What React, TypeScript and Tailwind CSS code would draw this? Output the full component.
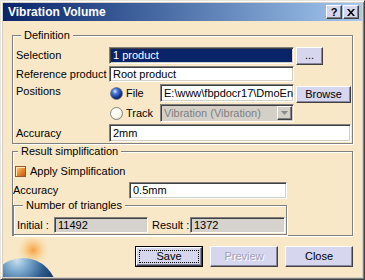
import React from "react";
import clsx from "clsx";

const beige = "bg-[#f8e8c8]";

function Field({ className, children }: { className?: string; children?: React.ReactNode }) {
  return (
    <div
      className={clsx(
        "flex items-center overflow-hidden whitespace-nowrap border border-t-[#808080] border-l-[#808080] border-b-white border-r-white pl-[3px] shadow-[inset_1px_1px_0_#404040,inset_-1px_-1px_0_#d4d0c8]",
        className
      )}
    >
      {children}
    </div>
  );
}

function Btn({ className, children }: { className?: string; children?: React.ReactNode }) {
  return (
    <div
      className={clsx(
        "flex items-center justify-center bg-[#d6d6ee] border border-t-white border-l-white border-b-[#404040] border-r-[#404040] shadow-[inset_-1px_-1px_0_#8888a0]",
        className
      )}
    >
      {children}
    </div>
  );
}

function RadioOn() {
  return (
    <svg width="13" height="13" viewBox="0 0 13 13">
      <defs>
        <radialGradient id="rOn" cx="38%" cy="32%" r="70%">
          <stop offset="0" stopColor="#d8e6ff" />
          <stop offset="0.3" stopColor="#4a7ee0" />
          <stop offset="0.75" stopColor="#16338c" />
          <stop offset="1" stopColor="#0a1a50" />
        </radialGradient>
      </defs>
      <circle cx="6.5" cy="6.5" r="6" fill="url(#rOn)" stroke="#7a7a7a" strokeWidth="0.8" />
    </svg>
  );
}

function RadioOff() {
  return (
    <svg width="13" height="13" viewBox="0 0 13 13">
      <defs>
        <radialGradient id="rOff" cx="40%" cy="35%" r="70%">
          <stop offset="0" stopColor="#ffffff" />
          <stop offset="0.7" stopColor="#fbf7ea" />
          <stop offset="1" stopColor="#d8d4c4" />
        </radialGradient>
      </defs>
      <circle cx="6.5" cy="6.5" r="6" fill="url(#rOff)" stroke="#6a6a6a" strokeWidth="0.8" />
    </svg>
  );
}

function Globe() {
  return (
    <svg width="60" height="39" viewBox="0 0 60 39" className="self-end">
      <defs>
        <radialGradient id="glow" cx="30" cy="12" r="18" gradientUnits="userSpaceOnUse">
          <stop offset="0" stopColor="#f6a040" />
          <stop offset="0.45" stopColor="#f8c880" stopOpacity="0.7" />
          <stop offset="1" stopColor="#f8e8c8" stopOpacity="0" />
        </radialGradient>
        <radialGradient id="earth" cx="14" cy="22" r="40" gradientUnits="userSpaceOnUse">
          <stop offset="0" stopColor="#c8e0f0" />
          <stop offset="0.3" stopColor="#7aa8cc" />
          <stop offset="0.7" stopColor="#2c5a8c" />
          <stop offset="1" stopColor="#183a64" />
        </radialGradient>
      </defs>
      <circle cx="30" cy="12" r="18" fill="url(#glow)" />
      <circle cx="20" cy="54" r="34" fill="url(#earth)" />
    </svg>
  );
}

export default function App() {
  return (
    <div className="w-[365px] h-[280px] flex flex-col bg-[#d4d0c8] p-[2px] border border-t-[#e8e4dc] border-l-[#e8e4dc] border-b-[#404040] border-r-[#404040] shadow-[inset_1px_1px_0_#fff,inset_-1px_-1px_0_#808080] font-['Liberation_Sans',Arial,sans-serif] text-[11px] leading-[13px] text-black">
      {/* Title bar */}
      <div className="h-[18px] flex items-center bg-gradient-to-r from-[#0a246a] to-[#a6caf0] pl-[5px] pr-[3px]">
        <span className="text-white font-bold text-[12px]">Vibration Volume</span>
        <div className="ml-auto flex gap-[1px]">
          <Btn className="w-[16px] h-[14px] bg-[#d4d0c8] shadow-[inset_-1px_-1px_0_#808080]">
            <span className="font-bold text-[11px] leading-none">?</span>
          </Btn>
          <Btn className="w-[16px] h-[14px] bg-[#d4d0c8] shadow-[inset_-1px_-1px_0_#808080]">
            <svg width="8" height="7" viewBox="0 0 8 7">
              <path d="M0 0h2l2 2.5L6 0h2L5 3.5 8 7H6L4 4.5 2 7H0l3-3.5z" fill="#000" />
            </svg>
          </Btn>
        </div>
      </div>

      {/* Body */}
      <div className={clsx("flex-1 flex flex-col px-[9px] pt-[8px]", beige)}>
        {/* Definition */}
        <fieldset className="border border-[#808080] shadow-[inset_1px_1px_0_#fff,1px_1px_0_#fff] pl-[3px] pr-[1px] pt-[5px] pb-[1px]">
          <legend className={clsx("ml-[5px] px-[3px]", beige)}>Definition</legend>

          <div className="flex items-center h-[17px]">
            <div className="w-[93px]">Selection</div>
            <Field className="w-[185px] h-[17px] bg-[#0a246a] text-white">1 product</Field>
            <Btn className="ml-[2px] w-[27px] h-[18px]">...</Btn>
          </div>

          <div className="flex items-center h-[16px] mt-[2px]">
            <div className="w-[93px]">Reference product</div>
            <Field className="w-[185px] h-[16px] bg-white">Root product</Field>
          </div>

          <div className="flex mt-[2px]">
            <div className="w-[93px] pt-[1px]">Positions</div>
            <div className="flex flex-col gap-[2px]">
              <div className="flex items-center h-[18px]">
                <div className="w-[51px] flex items-center pl-[1px] gap-[3px]">
                  <RadioOn />
                  <span>File</span>
                </div>
                <Field className="w-[134px] h-[18px] bg-white">E:\www\fbpdocr17\DmoEn</Field>
                <Btn className="ml-[2px] w-[55px] h-[17px] mt-[2px]">Browse</Btn>
              </div>
              <div className="flex items-center h-[18px]">
                <div className="w-[51px] flex items-center pl-[1px] gap-[3px]">
                  <RadioOff />
                  <span>Track</span>
                </div>
                <Field className="w-[134px] h-[18px] bg-[#d4d0c8] text-[#808080] pr-[1px]">
                  <span className="flex-1">Vibration (Vibration)</span>
                  <div className="w-[15px] h-[14px] flex items-center justify-center bg-[#d4d0c8] border border-t-white border-l-white border-b-[#404040] border-r-[#404040] shadow-[inset_-1px_-1px_0_#808080]">
                    <svg width="7" height="4" viewBox="0 0 7 4">
                      <path d="M0 0h7L3.5 4z" fill="#8a8a8a" />
                    </svg>
                  </div>
                </Field>
              </div>
            </div>
          </div>

          <div className="flex items-center h-[18px] mt-[2px]">
            <div className="w-[93px]">Accuracy</div>
            <Field className="w-[242px] h-[18px] bg-white">2mm</Field>
          </div>
        </fieldset>

        {/* Result simplification */}
        <fieldset className="mt-[1px] border border-[#808080] shadow-[inset_1px_1px_0_#fff,1px_1px_0_#fff] pt-[7px]">
          <legend className={clsx("ml-[5px] px-[3px]", beige)}>Result simplification</legend>

          <div className="flex items-center h-[12px] pl-[2px] gap-[4px]">
            <div className="w-[11px] h-[11px] border border-[#9a5a28] bg-gradient-to-br from-[#fbd08a] via-[#ec8c30] to-[#b85a18] shadow-[inset_1px_1px_0_#fde6bc]" />
            <span>Apply Simplification</span>
          </div>

          <div className="flex items-center h-[17px] mt-[5px]">
            <div className="w-[116px]">Accuracy</div>
            <Field className="w-[158px] h-[17px] bg-white">0.5mm</Field>
          </div>

          <fieldset className="w-[274px] border border-[#808080] shadow-[inset_1px_1px_0_#fff,1px_1px_0_#fff] pl-[3px] pt-[5px] pb-[1px]">
            <legend className={clsx("ml-[6px] px-[3px]", beige)}>Number of triangles</legend>
            <div className="flex items-center h-[16px]">
              <div className="w-[37px]">Initial :</div>
              <Field className="w-[94px] h-[16px] bg-[#d6d3ce]">11492</Field>
              <div className="w-[38px] ml-[4px]">Result :</div>
              <Field className="w-[95px] h-[16px] bg-[#d6d3ce]">1372</Field>
            </div>
          </fieldset>
        </fieldset>

        {/* Bottom: globe + buttons */}
        <div className="flex-1 flex justify-between -ml-[9px]">
          <Globe />
          <div className="flex gap-[7px] mt-[10px] h-[21px]">
            <div className="w-[68px] h-[21px] border border-black flex">
              <Btn className="flex-1 p-[2px]">
                <div className="flex-1 h-full flex items-center justify-center border border-dotted border-black">Save</div>
              </Btn>
            </div>
            <Btn className="w-[68px] h-[21px] text-[#a0a0b8] [text-shadow:1px_1px_0_#fff]">Preview</Btn>
            <Btn className="w-[68px] h-[21px]">Close</Btn>
          </div>
        </div>
      </div>
    </div>
  );
}
